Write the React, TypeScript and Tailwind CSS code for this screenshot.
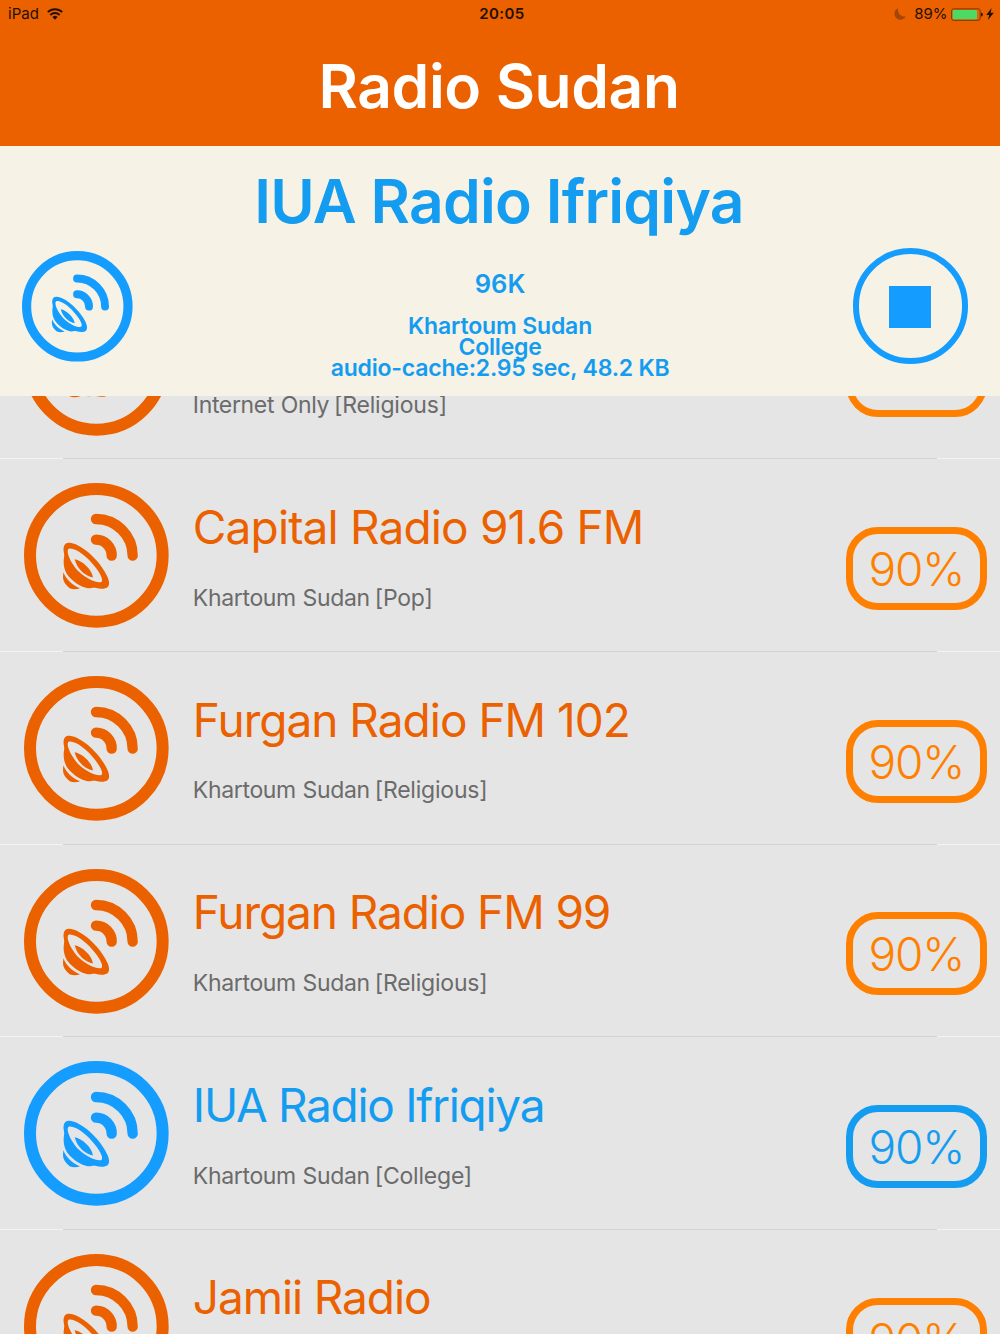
import React from "react";

function StationIcon({ className }: { className: string }) {
  return (
    <svg viewBox="43 40 434 434" className={`overflow-visible ${className}`} fill="none" stroke="currentColor">
      <circle cx="260" cy="257" r="199" strokeWidth="36" />
      <path d="M259 148A110 110 0 0 1 369 258M259 210A47 47 0 0 1 306 258" strokeWidth="31" strokeLinecap="round" />
      <g transform="translate(0 -1.5)" stroke="none" fill="currentColor">
        <path
          fillRule="evenodd"
          d="M179 221C164 220 159 234 163 252C165 261 162 267 162 277C162 296 167 311 180 325C194 340 213 353 234 357C244 358 248 354 257 356C270 360 287 361 295 353C304 342 294 319 277 295C252 258 207 222 179 221ZM179 238C199 236 235 264 256 293C273 314 281 332 276 338C266 344 235 333 208 308C183 283 165 242 179 238Z"
        />
        <path d="M195 270C217 274 246 299 250 325C228 321 202 300 195 270Z" />
        <path d="M161 309C169 330 188 348 211 357C200 361 189 361 180 357C169 348 160 338 160 323Z" />
      </g>
    </svg>
  );
}

interface Station {
  name: string;
  place: string;
  genre: string;
  tracking: string;
  active?: boolean;
}

const stations: Station[] = [
  { name: "Blue Nile Radio", place: "Internet Only", genre: "[Religious]", tracking: "tracking-[-0.9px]" },
  { name: "Capital Radio 91.6 FM", place: "Khartoum Sudan", genre: "[Pop]", tracking: "tracking-[-0.85px]" },
  { name: "Furgan Radio FM 102", place: "Khartoum Sudan", genre: "[Religious]", tracking: "tracking-[-1px]" },
  { name: "Furgan Radio FM 99", place: "Khartoum Sudan", genre: "[Religious]", tracking: "tracking-[-1.1px]" },
  { name: "IUA Radio Ifriqiya", place: "Khartoum Sudan", genre: "[College]", tracking: "tracking-[-1.3px]", active: true },
  { name: "Jamii Radio", place: "Khartoum Sudan", genre: "[Pop]", tracking: "tracking-[-1.1px]" },
];

function StationRow({ station }: { station: Station }) {
  const iconColor = station.active ? "text-[#149dff]" : "text-[#eb6100]";
  const titleColor = station.active ? "text-[#149cf0]" : "text-[#eb6100]";
  const badge = station.active ? "border-[#149cf0] text-[#149cf0]" : "border-[#ff8000] text-[#ff8000]";
  return (
    <li className="flex h-[192.67px] shrink-0 flex-col">
      <div className="flex min-h-0 flex-1 items-start pl-[24.3px] pr-[13.4px]">
        <StationIcon className={`mt-[24px] size-[144.67px] shrink-0 ${iconColor}`} />
        <div className="ml-[23.9px] min-w-0 flex-1 whitespace-nowrap">
          <h2 className={`mt-[39.4px] h-[56px] text-[46px] leading-[56px] ${titleColor} ${station.tracking}`}>{station.name}</h2>
          <p className="mt-[27.9px] text-[23px] leading-[30px] tracking-[-0.35px] text-[#6b6b6b] [word-spacing:0.5px]">
            {station.place}
            <span className="ml-[5px] tracking-[-0.2px]">{station.genre}</span>
          </p>
        </div>
        <div
          className={`mt-[67.6px] flex h-[83px] w-[140.6px] items-center justify-center rounded-[32px] border-[7.5px] pt-[2px] text-[46px] font-[350] tracking-[-1.2px] ${badge}`}
        >
          90%
        </div>
      </div>
      <div className="flex h-px shrink-0">
        <span className="w-[63px] bg-[#f3f3f3]" />
        <span className="flex-1 bg-[#d2d2d2]" />
        <span className="w-[63px] bg-[#f3f3f3]" />
      </div>
    </li>
  );
}

function StatusBar() {
  return (
    <div className="grid h-7 grid-cols-3 items-center pl-2 pr-[6px] text-[15px] leading-7 text-[#241000]">
      <div className="flex items-center gap-2">
        <span>iPad</span>
        <svg viewBox="0 0 16 12" className="h-3 w-4" fill="none" stroke="currentColor" strokeWidth="1.9">
          <path d="M.8 4.2A10.2 10.2 0 0 1 15.2 4.2M3.3 7A6.7 6.7 0 0 1 12.7 7" />
          <path d="M5.4 9A3.7 3.7 0 0 1 10.6 9L8 11.7Z" fill="currentColor" stroke="none" />
        </svg>
      </div>
      <span className="pl-0.5 text-center font-semibold tracking-[0.4px]">20:05</span>
      <div className="flex items-center justify-end">
        <svg viewBox="0 0 12 12" className="mr-[8px] size-3" fill="#a44607">
          <path d="M4.2.2A6 6 0 1 0 11.8 8.4A6.6 6.6 0 0 1 4.2.2Z" />
        </svg>
        <span>89%</span>
        <svg viewBox="0 0 32 13" className="ml-[3.5px] h-[13px] w-8">
          <rect x=".6" y=".9" width="28.6" height="11.4" rx="2" fill="none" stroke="#7a3508" strokeWidth="1" />
          <rect x="1.7" y="1.9" width="24.3" height="9.4" rx=".8" fill="#4cd964" />
          <path d="M30 4.4Q32 5 32 6.6T30 8.8Z" fill="#361802" />
        </svg>
        <svg viewBox="0 0 8 12" className="ml-[3px] h-3 w-2" fill="currentColor">
          <path d="M5.6 0L.2 6.9H3.2L2 12L7.8 4.8H4.6Z" />
        </svg>
      </div>
    </div>
  );
}

export default function App() {
  return (
    <main className="flex h-[1334px] w-[1000px] flex-col overflow-hidden bg-[#e5e5e5] font-['Inter',sans-serif]">
      <header className="h-[146px] shrink-0 bg-[#eb6100]">
        <StatusBar />
        <h1 className="pr-[2px] pt-[18px] text-center text-[60.5px] font-[570] leading-[80px] tracking-[-0.4px] text-white">Radio Sudan</h1>
      </header>
      <section className="h-[250px] shrink-0 bg-[#f6f2e5]">
        <h2 className="pr-[2px] pt-[15px] text-center text-[60.5px] font-[570] leading-[80px] tracking-[-0.75px] text-[#149cf0]">IUA Radio Ifriqiya</h2>
        <div className="flex items-start justify-between pl-[22px] pr-[32px]">
          <StationIcon className="mt-[10px] size-[110.6px] shrink-0 text-[#149dff]" />
          <div className="flex w-[380px] flex-col items-center whitespace-nowrap pl-[15px] font-[570] text-[#149cf0]">
            <span className="mt-[28px] text-[25.5px] leading-[30px]">96K</span>
            <div className="mt-[17px] flex flex-col items-center text-[23px] leading-[20.8px]">
              <span className="tracking-[-0.15px]">Khartoum Sudan</span>
              <span className="tracking-[-0.2px]">College</span>
              <span className="tracking-[-0.2px]">audio-cache:2.95 sec, 48.2 KB</span>
            </div>
          </div>
          <button className="mt-[7px] flex size-[115.5px] shrink-0 items-center justify-center rounded-full border-[6.5px] border-[#149dff] pt-[2px]">
            <span className="size-[42px] bg-[#149dff]" />
          </button>
        </div>
      </section>
      <div className="flex min-h-0 flex-1 flex-col overflow-hidden">
        <ul className="mt-[-129.2px] flex flex-col">
          {stations.map((station) => (
            <StationRow key={station.name} station={station} />
          ))}
        </ul>
      </div>
    </main>
  );
}
